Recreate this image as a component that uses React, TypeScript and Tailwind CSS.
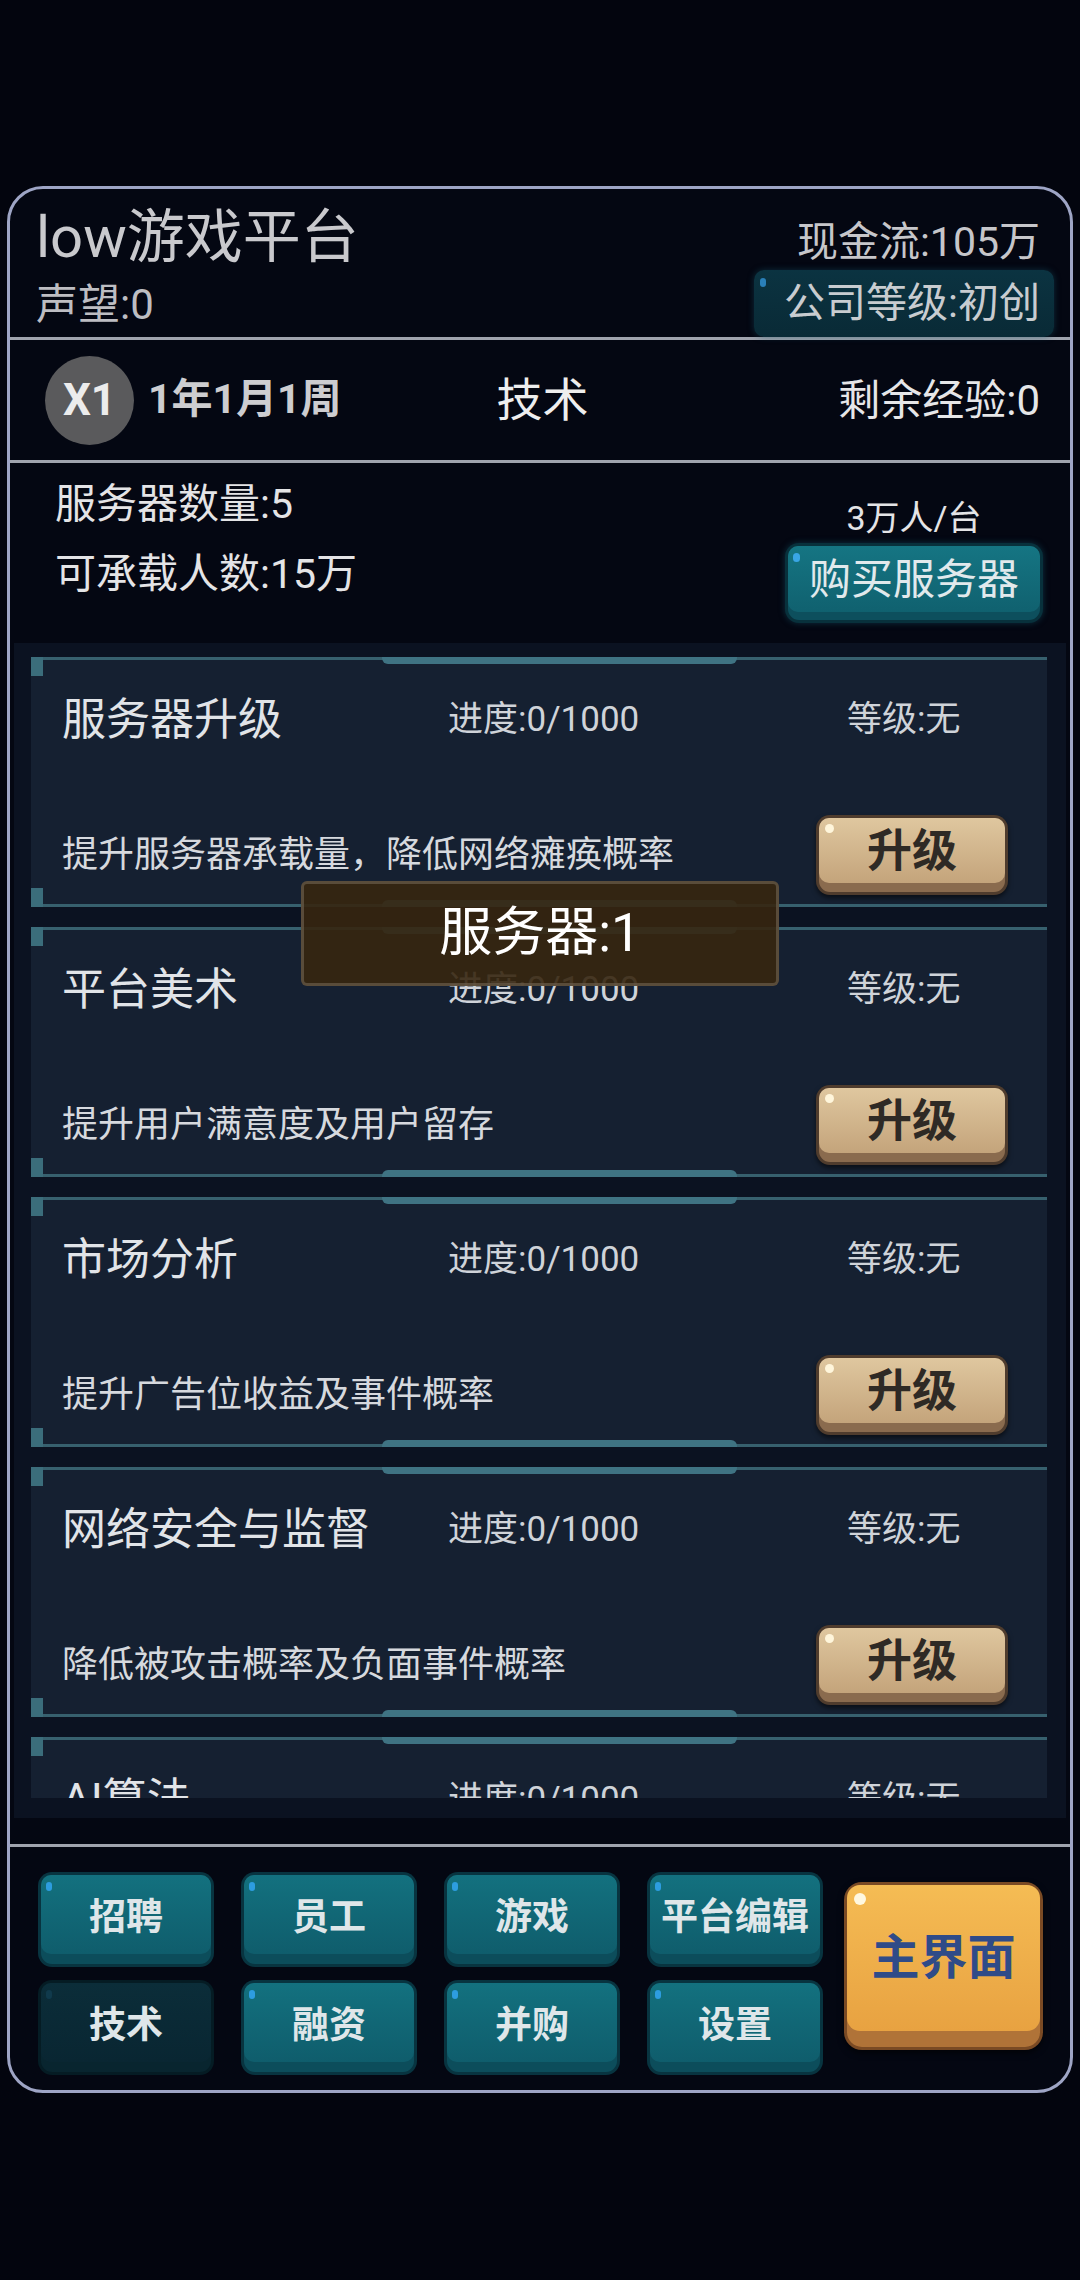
const techs = [
  { name: '服务器升级', desc: '提升服务器承载量，降低网络瘫痪概率' },
  { name: '平台美术', desc: '提升用户满意度及用户留存' },
  { name: '市场分析', desc: '提升广告位收益及事件概率' },
  { name: '网络安全与监督', desc: '降低被攻击概率及负面事件概率' },
  { name: 'AI算法', desc: '' },
];

const navItems = [
  { label: '招聘', active: false },
  { label: '员工', active: false },
  { label: '游戏', active: false },
  { label: '平台编辑', active: false },
  { label: '技术', active: true },
  { label: '融资', active: false },
  { label: '并购', active: false },
  { label: '设置', active: false },
];

function UpgradeButton() {
  return (
    <div className="h-[80px] w-[192px] shrink-0 rounded-[14px] bg-[#4f3c2d] p-[3px] shadow-[0_3px_5px_rgba(0,0,0,0.55)]">
      <div className="h-full rounded-[11px] bg-[#8a6b4e] pb-[9px]">
        <div className="relative flex h-full items-center justify-center rounded-[10px] bg-gradient-to-b from-[#dfc79f] to-[#c4a47b] pt-[2px] text-[45px] font-semibold text-[#2e2a25]">
          <span className="absolute left-[6px] top-[6px] h-[9px] w-[9px] rounded-full bg-[#fff6dc]" />
          升级
        </div>
      </div>
    </div>
  );
}

function TechCard({ name, desc }: { name: string; desc: string }) {
  return (
    <div className="relative h-[250px] shrink-0 border-y-[3px] border-[#37606e] bg-[#152031]">
      {/* corner brackets + center bumps */}
      <div className="absolute -top-[3px] left-0 h-[19px] w-[12px] bg-[#3b6d7b]" />
      <div className="absolute -bottom-[3px] left-0 h-[19px] w-[12px] bg-[#3b6d7b]" />
      <div className="absolute -top-[3px] left-[351px] h-[7px] w-[355px] rounded-b-[6px] bg-[#3f7383]" />
      <div className="absolute -bottom-[3px] left-[351px] h-[7px] w-[355px] rounded-t-[6px] bg-[#3f7383]" />

      <div className="mt-[34px] flex h-[52px] items-center pl-[31px]">
        <div className="w-[386px] text-[44px] text-[#e1e4e8]">{name}</div>
        <div className="w-[399px] text-[35px] text-[#cfd3d9]">进度:0/1000</div>
        <div className="text-[35px] text-[#cfd3d9]">等级:无</div>
      </div>
      {desc && (
        <div className="mt-[69px] flex items-center justify-between pl-[31px] pr-[39px]">
          <div className="text-[36px] text-[#d6d9de]">{desc}</div>
          <UpgradeButton />
        </div>
      )}
    </div>
  );
}

function NavButton({ label, active }: { label: string; active: boolean }) {
  return (
    <div className={active ? 'h-[95px] rounded-[14px] bg-[#051c24] p-[3px]' : 'h-[95px] rounded-[14px] bg-[#083440] p-[3px]'}>
      <div className={active ? 'h-full rounded-[11px] bg-[#08252f] pb-[10px]' : 'h-full rounded-[11px] bg-[#0c4d5b] pb-[10px]'}>
        <div
          className={
            active
              ? 'relative flex h-full items-center justify-center rounded-[10px] bg-gradient-to-b from-[#0b2d39] to-[#092632] text-[37px] font-bold text-[#dfe6e9]'
              : 'relative flex h-full items-center justify-center rounded-[10px] bg-gradient-to-b from-[#13717f] to-[#0f5d6c] text-[37px] font-bold text-[#dfe6e9]'
          }
        >
          <span className={active ? 'absolute left-[5px] top-[7px] h-[9px] w-[6px] rounded-full bg-[#103a4c]' : 'absolute left-[5px] top-[7px] h-[9px] w-[6px] rounded-full bg-[#2d9de0]'} />
          <span className="mt-[6px]">{label}</span>
        </div>
      </div>
    </div>
  );
}

export default function App() {
  return (
    <div className="min-h-[2280px] w-[1080px] bg-[#03050e] pt-[186px] font-['Roboto','Noto_Sans_CJK_SC',sans-serif]">
      <div className="relative mx-[7px] h-[1907px] overflow-hidden rounded-[36px] border-[3px] border-[#9ea5c5] bg-[#040712]">
        {/* header */}
        <div className="flex h-[148px] justify-between">
          <div className="pl-[26px] pt-[16px]">
            <div className="text-[58px] leading-[64px] text-[#c9c9cd]">low游戏平台</div>
            <div className="mt-[12px] text-[42px] leading-[48px] text-[#bdbdc2]">声望:0</div>
          </div>
          <div className="flex flex-col items-end pr-[16px] pt-[29px]">
            <div className="mr-[14px] text-[41px] leading-[48px] text-[#c6c6ca]">现金流:105万</div>
            <div className="relative mt-[4px] flex h-[67px] w-[300px] items-center justify-end rounded-[10px] bg-gradient-to-b from-[#0b3341] to-[#092a36] pr-[14px] text-[41px] text-[#c8ccd0] shadow-[0_0_6px_rgba(20,80,100,0.5)]">
              <span className="absolute left-[6px] top-[8px] h-[9px] w-[6px] rounded-full bg-[#2a7fb8]" />
              公司等级:初创
            </div>
          </div>
        </div>
        <div className="h-[3px] bg-[#a0a4ae]" />

        {/* date / tab row */}
        <div className="grid h-[120px] grid-cols-[1fr_auto_1fr] items-center pl-[35px] pr-[30px]">
          <div className="flex items-center gap-[14px]">
            <div className="flex h-[89px] w-[89px] items-center justify-center rounded-full bg-[#5a5a5c] text-[44px] font-bold text-[#ececec]">X1</div>
            <div className="text-[41px] font-bold text-[#cdcdd0]">1年1月1周</div>
          </div>
          <div className="text-[46px] text-[#eeeeee]">技术</div>
          <div className="text-right text-[42px] text-[#e6e6e8]">剩余经验:0</div>
        </div>
        <div className="h-[3px] bg-[#a0a4ae]" />

        {/* servers */}
        <div className="flex h-[180px] justify-between">
          <div className="pl-[45px] pt-[17px] text-[41px] leading-[48px] text-[#e4e4e6]">
            <div>服务器数量:5</div>
            <div className="mt-[22px]">可承载人数:15万</div>
          </div>
          <div className="flex flex-col items-center pr-[27px] pt-[35px]">
            <div className="text-[34px] leading-[40px] text-[#e4e4e6]">3万人/台</div>
            <div className="mt-[5px] h-[80px] w-[258px] rounded-[14px] bg-[#08313c] p-[3px] shadow-[0_0_6px_rgba(20,90,110,0.5)]">
              <div className="h-full rounded-[11px] bg-[#0d4f5d] pb-[8px]">
                <div className="relative flex h-full items-center justify-center rounded-[10px] bg-gradient-to-b from-[#157583] to-[#10616f] text-[42px] text-[#e1e9ec]">
                  <span className="absolute left-[5px] top-[7px] h-[9px] w-[7px] rounded-full bg-[#39a6e6]" />
                  购买服务器
                </div>
              </div>
            </div>
          </div>
        </div>

        {/* tech list */}
        <div className="mx-[4px] h-[1175px] bg-[#0b1221] pb-[20px] pl-[17px] pr-[19px] pt-[14px]">
          <div className="flex h-[1141px] flex-col gap-[20px] overflow-hidden">
            {techs.map((t) => (
              <TechCard key={t.name} name={t.name} desc={t.desc} />
            ))}
          </div>
        </div>

        <div className="mt-[26px] h-[3px] bg-[#a0a4ae]" />

        {/* bottom nav */}
        <div className="flex items-start pl-[28px] pt-[25px]">
          <div className="grid grid-cols-[176px_176px_176px_176px] gap-x-[27px] gap-y-[13px]">
            {navItems.map((n) => (
              <NavButton key={n.label} label={n.label} active={n.active} />
            ))}
          </div>
          <div className="ml-[21px] mt-[10px] h-[168px] w-[199px] rounded-[18px] bg-[#7a4a24] p-[3px] shadow-[0_3px_6px_rgba(0,0,0,0.6)]">
            <div className="h-full rounded-[15px] bg-[#b07338] pb-[16px]">
              <div className="relative flex h-full items-center justify-center rounded-[13px] bg-gradient-to-b from-[#f5bc54] to-[#e8a241] text-[48px] font-bold text-[#2f4b88]">
                <span className="absolute left-[7px] top-[8px] h-[12px] w-[12px] rounded-full bg-[#fff8e0]" />
                主界面
              </div>
            </div>
          </div>
        </div>

        {/* toast */}
        <div className="absolute left-[291px] top-[692px] flex h-[105px] w-[478px] items-center justify-center rounded-[6px] border-[3px] border-[#6b5c4c]/70 bg-[#36260f]/90 text-[53px] text-white">
          服务器:1
        </div>
      </div>
    </div>
  );
}
